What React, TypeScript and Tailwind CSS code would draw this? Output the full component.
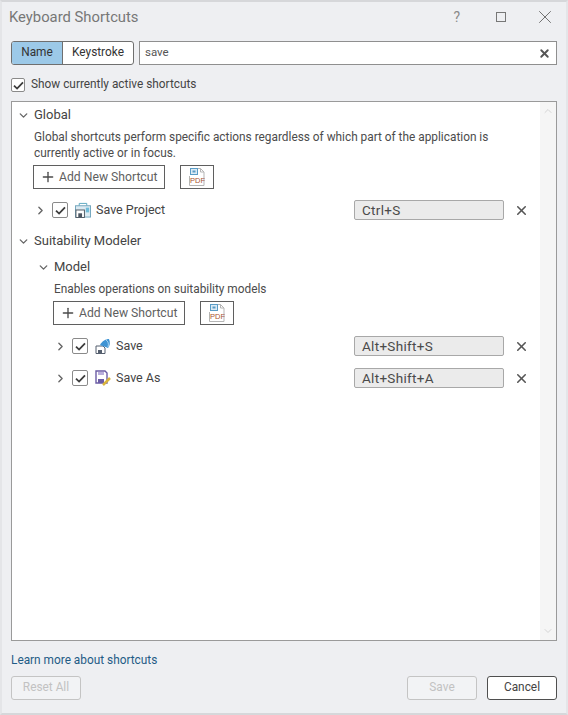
import React from 'react';
import { ChevronDown, ChevronRight, ChevronUp, Plus, X } from 'lucide-react';

const Check = () => (
  <svg width="11" height="9" viewBox="0 0 12 10" fill="none">
    <path d="M1 5.2 L4.4 8.4 L11 1.4" stroke="#3d3d3d" strokeWidth="2" />
  </svg>
);

const CheckBox = () => (
  <span className="flex h-4 w-4 shrink-0 items-center justify-center rounded-[2px] border border-[#8a8a8a] bg-white">
    <Check />
  </span>
);

const PdfIcon = () => (
  <svg width="16" height="18" viewBox="0 0 16 18" fill="none">
    <path d="M9 .5 H11.5 L15 4 V17.5 H.5 V8" stroke="#b5b5b5" fill="#fff" />
    <path d="M11.5 .5 V4 H15" stroke="#b5b5b5" />
    <rect x="1.5" y=".5" width="7" height="6" fill="#dcebf5" stroke="#5a9cc6" />
    <rect x="3.5" y="2.5" width="3" height="2" fill="#5a9cc6" />
    <text x="1" y="15" fontSize="7.5" fontWeight="400" fill="#a8542f" fontFamily="Liberation Sans, sans-serif">PDF</text>
  </svg>
);

const SaveProjectIcon = () => (
  <svg width="16" height="16" viewBox="0 0 17 16" fill="none">
    <path d="M4.5 3.5 V1 H12.5 V3.5" stroke="#58a5bf" />
    <rect x=".5" y="3.5" width="16" height="12" fill="#dbeaf2" stroke="#6fa3bb" />
    <rect x="1" y="8" width="9" height="8" fill="#fff" stroke="#4b5560" />
    <rect x="3.5" y="11.5" width="4" height="4" fill="#4b5560" />
    <rect x="11.5" y="5.5" width="3.5" height="5" fill="#6fbcd8" />
  </svg>
);

const SaveIcon = () => (
  <svg width="16" height="16" viewBox="0 0 16 16" fill="none">
    <path d="M1 8 H8 L10 10 V15.5 H1 Z" fill="#fff" stroke="#555f6e" />
    <rect x="3" y="12" width="4" height="3" fill="#555f6e" />
    <path d="M5 7 C7 3 11 1 14 1 C15.5 4 15 8 13 10 C11 9 7 8 5 7 Z" fill="#3f94d4" />
    <path d="M11 2 C13 3 14 6 13 9" stroke="#a9d4f0" />
  </svg>
);

const SaveAsIcon = () => (
  <svg width="16" height="16" viewBox="0 0 16 16" fill="none">
    <path d="M1 1 H10 L12 3 V13 H1 Z" fill="#fff" stroke="#6b5ca5" strokeWidth="1.4" />
    <rect x="3" y="2" width="6" height="3" fill="#b9aedb" />
    <rect x="3" y="9" width="6" height="4" fill="#6b5ca5" />
    <path d="M8 15 L15 8" stroke="#d9b43c" strokeWidth="2.5" />
  </svg>
);

const AddRow = () => (
  <div className="flex items-center gap-[15px]">
    <button className="flex h-6 w-[132px] items-center whitespace-nowrap border border-[#5f5f5f] bg-white pl-[6px] text-[12.2px] text-[#5f5f5f]">
      <Plus size={16} strokeWidth={2} className="text-[#4a4a4a]" />
      <span className="ml-[3px]">Add New Shortcut</span>
    </button>
    <button className="flex h-6 w-[34px] items-center justify-center border border-[#5f5f5f] bg-white">
      <PdfIcon />
    </button>
  </div>
);

function ShortcutRow({ indent, icon, label, keys }: { indent: string; icon: React.ReactNode; label: string; keys: string }) {
  return (
    <div className="flex h-5 items-center">
      <div className={`flex items-center ${indent}`}>
        <ChevronRight size={13} strokeWidth={2.5} className="text-[#666]" />
        <span className="ml-[5px]"><CheckBox /></span>
        <span className="ml-[7px]">{icon}</span>
        <span className="ml-[5px] text-[12.5px] text-[#444]">{label}</span>
      </div>
      <div className="ml-auto flex items-center">
        <div className="flex h-5 w-[150px] items-center rounded-[2px] border border-[#a8a8a8] bg-[#ebebeb] pl-[7px] text-[13.5px] tracking-[0.3px] text-[#4a4a4a]">
          {keys}
        </div>
        <X size={15} strokeWidth={2.5} className="ml-[10px] mr-[11px] text-[#555]" />
      </div>
    </div>
  );
}

export default function App() {
  return (
    <div className="flex h-[715px] w-[568px] flex-col border-x-2 border-y-2 border-x-[#e4e5e8] border-y-[#d6d7da] bg-[#eeeff2] px-[9px] text-[11.85px] text-[#4c4c4c] [font-family:Roboto,sans-serif]">
      {/* Title bar */}
      <div className="flex h-[30px] items-center">
        <div className="-ml-[2px] text-[14.8px] text-[#777]">Keyboard Shortcuts</div>
        <div className="ml-auto flex items-center">
          <span className="mr-[36px] text-[14px] text-[#8a8a8a]">?</span>
          <span className="mr-[28px] h-[10px] w-[10px] border border-[#777]" />
          <X size={22} strokeWidth={1} className="mr-[1px] text-[#666]" />
        </div>
      </div>

      {/* Search */}
      <div className="mt-[9px] flex h-6 gap-[5px]">
        <div className="flex overflow-hidden rounded-[3px] border border-[#6f6f6f] bg-white">
          <div className="flex w-[51px] items-center justify-center border-r border-[#6f6f6f] bg-[#9cc9e8] text-[#333]">Name</div>
          <div className="flex w-[70px] items-center justify-center text-[#333]">Keystroke</div>
        </div>
        <div className="flex flex-1 items-center border border-[#8f8f8f] bg-white pl-[5px] text-[11.5px] text-[#555]">
          save
          <X size={13} strokeWidth={3.5} className="ml-auto mr-[5px] text-[#555]" />
        </div>
      </div>

      <div className="mt-[10px] flex h-[20px] items-center gap-[6px]">
        <span className="flex h-[14px] w-[14px] shrink-0 items-center justify-center rounded-[2px] border border-[#8a8a8a] bg-white">
          <Check />
        </span>
        <span className="text-[#444]">Show currently active shortcuts</span>
      </div>

      {/* Shortcut tree */}
      <div className="mt-[6px] flex h-[540px] border border-[#9a9a9a] bg-white">
        <div className="flex-1">
          <div className="ml-[5px] mt-[4px] flex h-[18px] items-center gap-[4px] text-[13px] text-[#444]">
            <ChevronDown size={13} strokeWidth={2.5} className="text-[#666]" />
            <span>Global</span>
          </div>
          <div className="ml-[22px] mt-[5px] w-[480px] leading-[16px]">
            Global shortcuts perform specific actions regardless of which part of the application is currently active or in focus.
          </div>
          <div className="ml-[21px] mt-[4px]"><AddRow /></div>
          <div className="mt-[11px]">
            <ShortcutRow indent="ml-[22px]" icon={<SaveProjectIcon />} label="Save Project" keys="Ctrl+S" />
          </div>
          <div className="ml-[5px] mt-[12px] flex h-[18px] items-center gap-[4px] text-[13px] text-[#444]">
            <ChevronDown size={13} strokeWidth={2.5} className="text-[#666]" />
            <span>Suitability Modeler</span>
          </div>
          <div className="ml-[25px] mt-[8px] flex h-[18px] items-center gap-[4px] text-[13px] text-[#444]">
            <ChevronDown size={13} strokeWidth={2.5} className="text-[#666]" />
            <span>Model</span>
          </div>
          <div className="ml-[42px] mt-[5px] leading-[16px]">Enables operations on suitability models</div>
          <div className="ml-[41px] mt-[4px]"><AddRow /></div>
          <div className="mt-[11px] flex flex-col gap-3">
            <ShortcutRow indent="ml-[42px]" icon={<SaveIcon />} label="Save" keys="Alt+Shift+S" />
            <ShortcutRow indent="ml-[42px]" icon={<SaveAsIcon />} label="Save As" keys="Alt+Shift+A" />
          </div>
        </div>
        <div className="flex w-[16px] flex-col items-center justify-between bg-[#f5f5f5] py-[3px]">
          <ChevronUp size={12} className="text-[#d5d5d5]" />
          <ChevronDown size={12} className="text-[#d5d5d5]" />
        </div>
      </div>

      {/* Footer */}
      <div className="mt-[11px] text-[#1f5c86]">Learn more about shortcuts</div>
      <div className="mt-[6px] flex items-center">
        <button className="h-6 w-[70px] rounded-[3px] border border-[#c4c4c4] bg-[#f2f3f5] text-[#c2c2c2]">Reset All</button>
        <button className="ml-auto h-6 w-[70px] rounded-[3px] border border-[#c4c4c4] bg-[#f2f3f5] text-[#c2c2c2]">Save</button>
        <button className="ml-[10px] h-6 w-[70px] rounded-[3px] border border-[#4f4f4f] bg-white text-[#444]">Cancel</button>
      </div>
    </div>
  );
}
